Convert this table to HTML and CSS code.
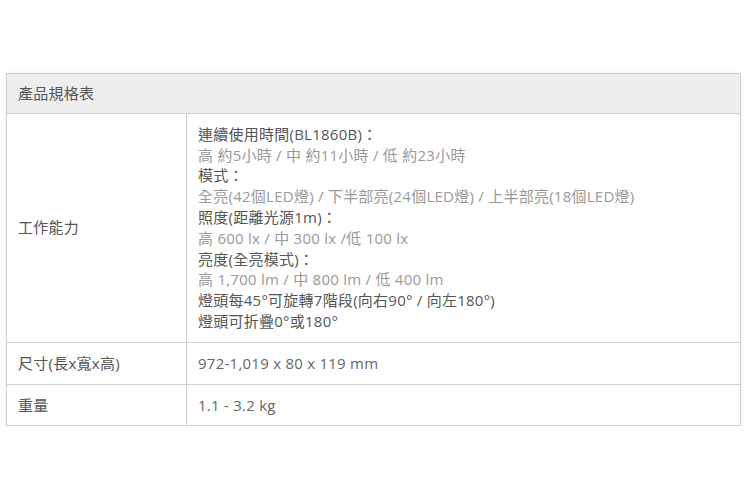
FILE: index.html
```html
<!DOCTYPE html>
<html lang="zh-Hant">
<head>
<meta charset="utf-8">
<link rel="stylesheet" href="styles.css">
</head>
<body>
<div class="wrap">
<table class="spec">
  <thead>
    <tr><th colspan="2">產品規格表</th></tr>
  </thead>
  <tbody>
    <tr>
      <td class="label">工作能力</td>
      <td class="value">
        <div class="dark">連續使用時間(BL1860B)：</div>
        <div class="light">高 約5小時 / 中 約11小時 / 低 約23小時</div>
        <div class="dark">模式：</div>
        <div class="light">全亮(42個LED燈) / 下半部亮(24個LED燈) / 上半部亮(18個LED燈)</div>
        <div class="dark">照度(距離光源1m)：</div>
        <div class="light">高 600 lx / 中 300 lx /低 100 lx</div>
        <div class="dark">亮度(全亮模式)：</div>
        <div class="light">高 1,700 lm / 中 800 lm / 低 400 lm</div>
        <div class="dark">燈頭每45°可旋轉7階段(向右90° / 向左180°)</div>
        <div class="dark">燈頭可折疊0°或180°</div>
      </td>
    </tr>
    <tr>
      <td class="label">尺寸(長x寬x高)</td>
      <td class="value mid">972-1,019 x 80 x 119 mm</td>
    </tr>
    <tr>
      <td class="label">重量</td>
      <td class="value mid">1.1 - 3.2 kg</td>
    </tr>
  </tbody>
</table>
</div>
</body>
</html>
```
FILE: styles.css
```css
html, body {
  margin: 0;
  padding: 0;
  background: #fff;
}
body {
  font-family: "Open Sans", "Noto Sans CJK TC", sans-serif;
  font-size: 15px;
  font-weight: 400;
  letter-spacing: 0.25px;
  line-height: 20.8px;
  color: #555;
}
.wrap {
  padding: 73px 10px 0 6px;
}
.spec {
  width: 735px;
  border-collapse: collapse;
  box-shadow: 0 0 5px rgba(0, 0, 0, 0.08);
}
.spec th,
.spec td {
  border: 1px solid #cfcfcf;
  padding: 10px 11px;
  text-align: left;
  vertical-align: middle;
}
.spec th {
  background: #eeeeee;
  font-weight: 400;
  color: #555;
  padding-top: 9px;
  padding-bottom: 9px;
}
.label {
  width: 157px;
  color: #555;
}
.dark {
  color: #555;
}
.light {
  color: #999;
}
.mid {
  color: #666;
}
```
